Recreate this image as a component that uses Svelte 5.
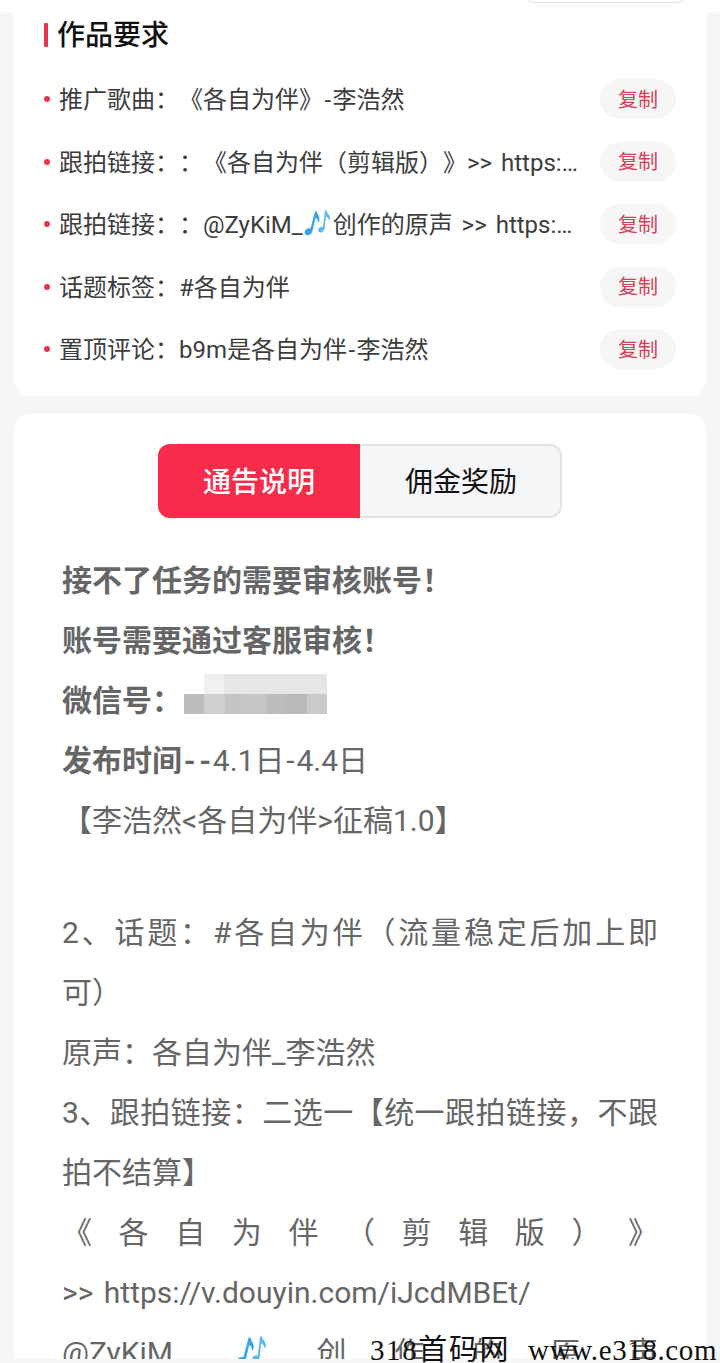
<script lang="ts">
	const rows = [
		{ label: '推广歌曲：', before: '《各自为伴》-李浩然' },
		{ label: '跟拍链接：', before: '：《各自为伴（剪辑版）》>> https://v.douyin.com/iJcdMBEt/' },
		{ label: '跟拍链接：', before: '：@ZyKiM_', note: true, after: '创作的原声 >> https://v.douyin.com/iJcdMBEt/' },
		{ label: '话题标签：', before: '#各自为伴' },
		{ label: '置顶评论：', before: 'b9m是各自为伴-李浩然' }
	];
	const pixels = ['#bdbdbd', '#cfcfcf', '#c4c4c4', '#c6c6c6', '#bcbcbc', '#b9b9b9', '#cacaca'];
</script>

{#snippet note()}
	<svg class="note" viewBox="0 0 28 26" aria-hidden="true">
		<path d="M11 1.5 L12.6 1 C13 4 15.5 5.5 15.5 9 C15.5 11 14.8 12 14 13 C14.2 10 12.8 8.6 11.6 7.8 L8.6 20.5 C8 23.6 5.6 25.6 3.2 25.2 C1 24.8 0 23 .8 21 C1.6 19 4 17.8 6.6 18.3 Z" fill="#3aa6e0" />
		<path d="M21 .5 L22.4 .2 C22.8 3 25.6 4.4 26 7.6 C26.2 9.2 25.6 10.2 25 11 C25 8.6 23.6 7.4 22 6.6 L20.6 18.6 C20.2 21.2 18.2 22.8 16.2 22.4 C14.6 22 13.8 20.6 14.4 19 C15 17.4 17 16.4 19 16.8 Z" fill="#5bbcec" />
	</svg>
{/snippet}

<div class="page">
	<div class="top-strip"><span class="top-btn"></span></div>

	<section class="card req">
		<h2 class="title">作品要求</h2>
		<ul class="rows">
			{#each rows as row}
				<li class="row">
					<span class="dot"></span>
					<span class="text">{row.label}{#each row.before.split('-') as part, i}{#if i}<span class="hy">-</span>{/if}{part}{/each}{#if row.note}{@render note()}{row.after}{/if}</span>
					<button class="copy">复制</button>
				</li>
			{/each}
		</ul>
	</section>

	<section class="card notice">
		<div class="tabs">
			<div class="tab active">通告说明</div>
			<div class="tab">佣金奖励</div>
		</div>

		<div class="content">
			<p><b>接不了任务的需要审核账号！</b></p>
			<p><b>账号需要通过客服审核！</b></p>
			<p class="wx">
				<b>微信号：</b>
				<span class="mosaic">
					{#each pixels as c}
						<i style="background:{c}"></i>
					{/each}
				</span>
			</p>
			<p><b>发布时间<span class="hy">-</span><span class="hy">-</span></b>4.1日<span class="hy">-</span>4.4日</p>
			<p>【李浩然&lt;各自为伴&gt;征稿1.0】</p>
			<p class="blank"></p>
			<p class="just">2、话题：#各自为伴（流量稳定后加上即可）</p>
			<p>原声：各自为伴_李浩然</p>
			<p class="just">3、跟拍链接：二选一【统一跟拍链接，不跟拍不结算】</p>
			<p class="just">《各自为伴（剪辑版）》 &gt;&gt;&nbsp;https://v.douyin.com/iJcdMBEt/</p>
			<p class="just">@ZyKiM_{@render note()}创作的原声 &gt;&gt;&nbsp;https://v.douyin.com/iJcdMBEt/</p>
		</div>
	</section>

	<div class="mark">318首码网<span class="mark-url">www.e318.com</span></div>
</div>

<style>
	:global(body) {
		margin: 0;
		background: #f5f6f8;
	}

	.page {
		position: relative;
		height: 1363px;
		overflow: hidden;
		background: #f5f6f8;
		font-family: Roboto, 'Noto Sans CJK SC', sans-serif;
		text-spacing-trim: space-all;
		word-spacing: 3px;
	}

	.top-strip {
		height: 13px;
		background: #fff;
		display: flex;
		justify-content: flex-end;
		padding-right: 35px;
		overflow: hidden;
	}

	.top-btn {
		width: 158px;
		height: 20px;
		margin-top: -19px;
		border: 1px solid #e4e4e4;
		border-radius: 8px;
	}

	.card {
		margin: 0 14px;
		background: #fff;
		border-radius: 0 0 16px 16px;
	}

	.req {
		height: 383px;
		padding: 0 30px;
		box-sizing: border-box;
	}

	.title {
		margin: 0;
		height: 44px;
		padding: 0 0 0 13px;
		position: relative;
		font-size: 28px;
		font-weight: 500;
		line-height: 46px;
		color: #111;
	}

	.title::before {
		content: '';
		position: absolute;
		left: 0;
		top: 10px;
		width: 4px;
		height: 24px;
		background: #e8334a;
		border-radius: 1px;
	}

	.rows {
		list-style: none;
		margin: 22px 0 0;
		padding: 0;
		display: flex;
		flex-direction: column;
		gap: 22.5px;
	}

	.row {
		display: flex;
		align-items: center;
		height: 40px;
	}

	.dot {
		flex: none;
		width: 6px;
		height: 6px;
		margin-right: 9px;
		border-radius: 50%;
		background: #e8334a;
	}

	.text {
		flex: 1;
		min-width: 0;
		white-space: nowrap;
		overflow: hidden;
		text-overflow: ellipsis;
		font-size: 24px;
		line-height: 38px;
		padding-top: 2px;
		color: #3d3d3d;
	}

	.hy {
		padding: 0 0.06em;
	}

	.note {
		display: inline-block;
		vertical-align: -3px;
		width: 30px;
		height: 26px;
	}

	.copy {
		flex: none;
		width: 76px;
		height: 40px;
		margin-left: 21px;
		padding: 0 0 2px;
		border: 0;
		border-radius: 20px;
		background: #f6f6f6;
		color: #d9405a;
		font: inherit;
		font-size: 20px;
	}

	.notice {
		margin-top: 18px;
		height: 945px;
		padding: 30px 48px 0;
		border-radius: 16px 16px 0 0;
		box-sizing: border-box;
		overflow: hidden;
	}

	.tabs {
		display: flex;
		width: 404px;
		height: 74px;
		margin: 0 auto;
		border-radius: 12px;
		overflow: hidden;
		background: #f5f6f8;
		box-shadow: inset 0 0 0 2px #e3e4e6;
	}

	.tab {
		width: 202px;
		text-align: center;
		font-size: 28px;
		padding-top: 4px;
		line-height: 70px;
		color: #111;
	}

	.tab.active {
		background: #f72b4a;
		color: #fff;
		font-weight: 500;
	}

	.content {
		margin-top: 33px;
		color: #666;
		font-size: 30px;
		line-height: 60px;
	}

	.content p {
		margin: 0;
	}

	.content b {
		font-weight: 700;
	}

	.content .note {
		width: 34px;
		height: 30px;
		margin-left: 48px;
		vertical-align: -3px;
	}

	.blank {
		height: 52px;
	}

	.just {
		text-align: justify;
	}

	.wx {
		display: flex;
		align-items: center;
	}

	.mosaic {
		display: flex;
		width: 143px;
		height: 20px;
		margin: 5px 0 0 2px;
		position: relative;
	}

	.mosaic::before {
		content: '';
		position: absolute;
		left: 40px;
		right: 0;
		bottom: 20px;
		height: 20px;
		background: #e6e6e6;
		box-shadow: -20px 0 0 #f0f0f0;
	}

	.mosaic::after {
		content: '';
		position: absolute;
		z-index: -1;
		inset: -30px -60px -8px -12px;
		border-radius: 30px;
		background: #f6f6f6;
		filter: blur(8px);
	}

	.mosaic i {
		flex: 1;
	}

	.mark {
		position: absolute;
		left: 370px;
		bottom: -5px;
		white-space: nowrap;
		font-family: 'Liberation Serif', 'Noto Sans CJK SC', serif;
		font-size: 29px;
		letter-spacing: 1.6px;
		line-height: 36px;
		color: #111;
	}

	.mark-url {
		margin-left: 18px;
		letter-spacing: 0.6px;
	}
</style>
